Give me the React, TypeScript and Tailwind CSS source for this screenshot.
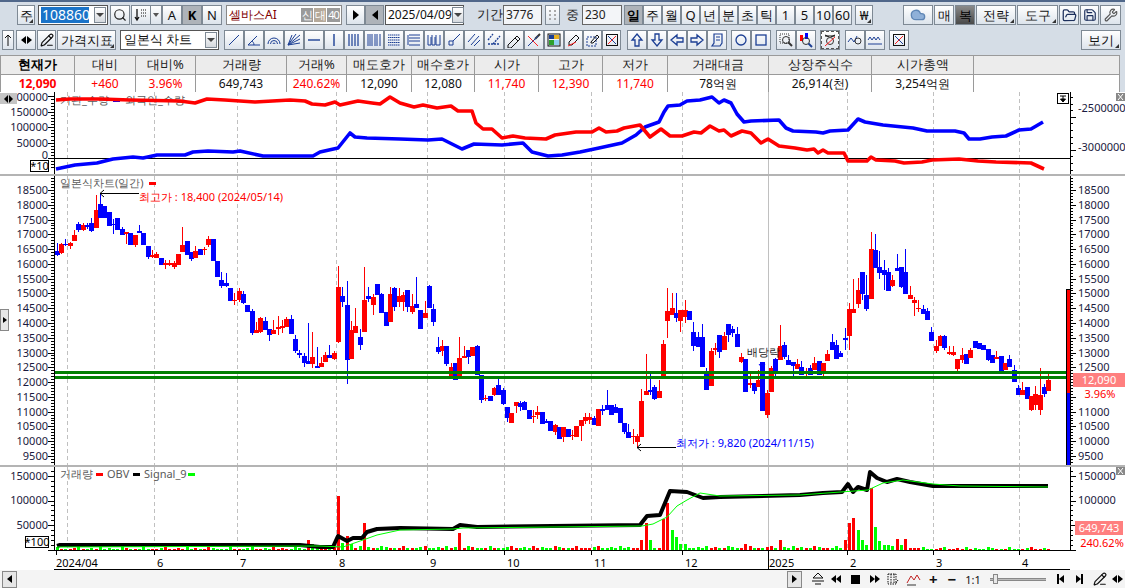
import type { ReactNode } from "react";
import { Search, FolderOpen, Save, Wrench, Cloud, PencilLine } from "lucide-react";

// [up, bodyTop, bodyBottom, wickTop, wickBottom] in page pixels
type Candle = [number, number, number, number?, number?];
const candles: Candle[] = [
  [0,251,255,243,256],[1,244,253,243,254],[0,244,245,239,246],[1,243,246,242,249],[1,235,241,230,241],[0,224,230,222,232],[1,225,230,223,231],[0,225,227,223,229],[0,223,231,218,232],[1,210,228,195,228],
  [0,204,218,193,218],[0,206,218],[0,212,226],[0,224,225,219,234],[0,218,230],[0,229,235,227,235],[1,232,234,232,244],[0,233,245],[1,235,245,235,247],[0,231,233,225,233],
  [0,233,245],[0,246,257,246,259],[1,255,257,250,258],[1,254,258,252,258],[0,258,265],[1,263,265,260,269],[1,263,265,260,266],[1,263,267,261,269],[1,254,265],[1,245,252,227,252],
  [0,241,255],[0,252,259,252,261],[1,251,258,246,258],[0,249,255],[1,249,250,247,255],[1,239,245,236,247],[0,239,261],[0,261,277],[0,280,286,272,288],[0,283,286,273,287],
  [0,288,301],[1,300,301,293,305],[1,291,300,288,302],[0,294,303,291,304],[0,305,312],[0,311,333,309,335],[1,330,333,322,333],[1,318,332,317,333],[0,321,330,317,330],[0,329,335,329,341],
  [1,330,334,320,334],[1,327,329,316,335],[1,326,328,320,333],[1,319,327,317,327],[0,319,334,315,334],[0,339,351,335,353],[0,353,355,350,358],[0,356,363,353,367],[0,361,364,323,364],[1,357,364,332,368],
  [0,366,368,347,368],[1,363,367,357,367],[1,355,362,352,362],[0,355,358,345,358],[1,353,359,351,360],[1,287,342,266,343],[0,296,302,287,307],[0,305,360,281,384],[1,330,359,321,359],[1,326,333,308,333],
  [0,337,345,329,350],[1,300,332,267,332],[0,296,299,287,302],[1,297,305,294,315],[0,284,295],[0,294,313,293,313],[0,312,326],[1,294,322,287,322],[0,288,307,287,311],[1,296,302,288,307],
  [1,295,302,292,311],[0,290,307,290,312],[1,306,312,294,314],[0,304,308,277,308],[0,310,329],[1,313,318,301,318],[0,286,308,285,308],[0,309,322,304,326],[0,347,352,337,354],[1,346,351,340,356],
  [0,346,364,346,366],[1,367,376,363,378],[0,363,380],[1,358,376,337,376],[1,356,358,346,358],[0,350,357,350,364],[1,347,356],[0,346,375,345,375],[0,375,400,375,403],[1,398,399,395,401],
  [0,396,401],[1,388,395,387,396],[0,385,395,379,395],[0,390,404,388,405],[0,407,418,407,422],[1,413,423],[1,402,406,402,413],[0,403,407,401,411],[0,402,410,401,410],[0,410,419],
  [1,416,417,410,423],[1,412,415,406,419],[0,412,424],[0,421,423,419,423],[0,421,431],[1,425,432,424,435],[0,427,439],[1,427,437,427,442],[0,429,437],[1,435,436,430,440],
  [1,426,437],[1,420,426,420,441],[1,417,421,413,424],[1,417,420,413,424],[0,418,425,416,425],[1,409,426],[0,409,411,405,415],[0,405,410,390,410],[0,405,415],[0,407,413,404,413],
  [0,408,423],[0,423,432,423,434],[0,432,438,424,438],[1,436,437,429,444],[1,436,442,434,447],[1,401,437,389,437],[1,391,395,354,395],[0,390,392,373,395],[0,387,399,385,400],[1,391,398,380,398],
  [1,344,376,340,377],[1,311,321,288,338],[1,308,315,293,315],[0,313,318,293,322],[1,310,321,310,332],[1,310,317,300,323],[0,311,320],[0,332,346,322,351],[0,337,347,332,347],[0,337,367,324,367],
  [0,372,390,368,390],[1,351,386,348,386],[1,348,350,343,355],[0,335,352,335,358],[1,336,350,332,350],[0,324,335,324,342],[0,329,333,326,337],[0,334,347,327,347],[1,357,362,353,363],[0,359,392],
  [1,383,385,373,388],[0,383,391,383,394],[1,380,387,370,387],[0,362,411],[1,393,415,390,418],[1,368,392,366,392],[0,359,371,358,376],[1,346,360,325,360],[0,345,357,342,359],[0,360,365,355,365],
  [0,362,366,362,376],[1,364,369,359,369],[0,367,375,361,375],[1,372,373,368,377],[0,368,375,365,375],[1,363,370,357,370],[0,361,375],[1,363,371,363,376],[1,354,361,350,361],[0,342,350,334,350],
  [0,345,359,340,359],[0,353,357,351,357],[0,338,340,328,350],[1,309,336,303,350],[1,309,313,279,313],[1,290,304,278,308],[0,272,294,272,300],[0,295,309,275,311],[1,249,299,232,299],[0,250,268,234,268],
  [0,267,273,251,279],[0,270,275,260,290],[0,272,291,268,291],[1,280,286,275,287],[0,268,271,254,271],[0,267,287,267,288],[0,272,294,249,294],[1,295,299,286,299],[1,300,303,297,316],[1,308,309,300,312],
  [0,309,314,305,314],[0,311,320,308,320],[0,332,341,327,341],[1,346,351,340,353],[1,336,346,335,346],[0,336,348,335,350],[1,352,354,346,355],[1,352,355,346,356],[1,359,369,359,371],[1,355,360,348,363],
  [0,354,364],[1,350,358,348,358],[0,341,348],[0,343,349],[0,345,350],[0,349,360,349,361],[0,355,363],[1,357,359,351,359],[0,356,371],[1,363,370],
  [0,359,367,355,367],[0,370,382,365,382],[0,388,395,385,395],[1,390,395,382,395],[0,387,399],[1,396,410,396,411],[1,394,405,386,410],[1,395,410,368,415],[0,387,394,384,397],[1,380,391,371,391],
];

const candleX = (i: number) => 56.7 + i * 4.33;

// volume spikes: index -> [height, up]
const spikes: Record<number, [number, number]> = {
  58:[10,1],59:[6,0],65:[54,1],66:[7,0],67:[14,1],68:[6,0],71:[27,1],93:[17,1],135:[10,1],136:[27,1],137:[10,0],140:[31,1],141:[47,1],142:[20,0],143:[13,0],144:[6,0],145:[6,0],
  159:[6,1],167:[10,1],182:[10,1],183:[27,1],184:[32,1],185:[20,0],186:[10,0],187:[5,0],188:[62,1],189:[23,0],190:[9,0],191:[5,0],192:[5,0],193:[4,0],194:[11,1],195:[5,0],196:[11,1],
};

const toPts = (p: number[][]) => p.map((a) => a.join(",")).join(" ");

const blueLine = [[56,169],[75,165],[97,163],[113,159],[133,157],[143,158],[157,155],[185,155],[193,152],[208,151],[233,152],[240,151],[263,156],[313,156],[320,152],[338,148],[350,133],[355,137],[367,138],[400,139],[428,140],[442,139],[462,149],[474,144],[502,145],[523,143],[532,152],[548,156],[562,155],[580,152],[599,148],[622,143],[636,135],[645,127],[659,122],[664,112],[668,106],[680,105],[687,101],[700,100],[712,97],[719,103],[724,100],[731,103],[737,114],[744,122],[751,121],[779,120],[786,128],[793,131],[816,132],[823,133],[830,131],[848,130],[858,119],[865,122],[883,125],[913,128],[927,131],[955,131],[964,133],[969,139],[980,139],[992,137],[1006,136],[1019,130],[1031,129],[1043,122]];
const redLine = [[56,100],[70,99],[100,99],[130,100],[180,101],[195,103],[207,99],[225,100],[255,102],[290,100],[305,101],[312,104],[325,105],[335,102],[340,105],[358,101],[372,103],[380,104],[390,97],[400,103],[414,107],[423,105],[437,108],[451,106],[458,111],[472,111],[476,123],[483,129],[492,129],[502,138],[513,136],[525,138],[546,139],[555,135],[576,132],[592,132],[599,128],[606,132],[617,131],[624,128],[640,125],[650,137],[661,129],[670,136],[682,136],[694,132],[701,133],[710,126],[719,131],[724,130],[731,136],[742,131],[751,133],[761,143],[768,139],[779,146],[795,148],[807,150],[814,149],[818,153],[823,150],[828,153],[844,153],[848,161],[867,161],[871,157],[876,160],[895,161],[904,163],[922,162],[932,160],[959,159],[978,161],[996,162],[1031,163],[1044,169]];
const obvLine = [[57,546],[60,545],[300,545],[320,547],[333,547],[338,536],[347,541],[353,538],[362,538],[367,532],[377,529],[400,528],[453,529],[460,525],[477,527],[640,525],[647,516],[660,515],[665,503],[670,491],[687,492],[703,498],[720,497],[800,495],[823,493],[842,492],[848,484],[853,492],[858,487],[867,490],[870,472],[877,478],[887,482],[897,479],[910,482],[933,486],[1008,486],[1048,486]];
const signalLine = [[57,547],[320,546],[343,547],[363,540],[377,535],[400,530],[453,529],[463,528],[642,526],[653,524],[667,517],[677,506],[687,500],[700,493],[720,496],[800,495],[827,493],[868,490],[883,483],[903,480],[933,484],[960,486],[1048,487]];

const gridX = [67, 154, 237, 336, 427, 504, 591, 682, 847, 933, 1019];

const priceY = (p: number) => 190 + (18500 - p) * 0.02955;

function GridLines({ y1, y2 }: { y1: number; y2: number }) {
  return (
    <>
      {gridX.map((x) => (
        <line key={x} x1={x + 0.5} x2={x + 0.5} y1={y1} y2={y2} stroke="#c0c0c0" strokeDasharray="4 3" />
      ))}
      <line x1={768.5} x2={768.5} y1={y1} y2={y2} stroke="#c0c0c0" />
    </>
  );
}

function Axis({ x, y1, y2, ticks, dir }: { x: number; y1: number; y2: number; ticks: { y: number; major: boolean }[]; dir: number }) {
  return (
    <g shapeRendering="crispEdges">
      <line x1={x + 0.5} x2={x + 0.5} y1={y1} y2={y2} stroke="#000" />
      {ticks.map((t, i) => (
        <line key={i} x1={x} x2={x + dir * (t.major ? 6 : 3)} y1={t.y} y2={t.y} stroke="#000" />
      ))}
    </g>
  );
}

function Label({ x, y, end, fill = "#1a1a40", children }: { x: number; y: number; end?: boolean; fill?: string; children: ReactNode }) {
  return (
    <text x={x} y={y + 4} fontSize="11" fill={fill} textAnchor={end ? "end" : "start"}>
      {children}
    </text>
  );
}

function CloseBox({ y }: { y: number }) {
  return (
    <>
      <rect x={1116} y={y} width={9} height={8} fill="#888" />
      <path d={`M1118 ${y + 1}l5 6M1123 ${y + 1}l-5 6`} stroke="#fff" />
    </>
  );
}

function FlowPanel() {
  const ticks: { y: number; major: boolean }[] = [];
  for (let v = -30000; v <= 200000; v += 10000) ticks.push({ y: 158 - v * 0.000308, major: v % 50000 === 0 });
  const right: { y: number; major: boolean }[] = [];
  for (let y = 97; y < 174; y += 6.6) right.push({ y: Math.round(y), major: Math.abs(y - 114) < 3.5 || Math.abs(y - 147) < 3.5 });
  return (
    <svg className="block bg-white" width={1125} height={82} viewBox="0 92 1125 82">
      <GridLines y1={92} y2={174} />
      <line x1={54} x2={1070} y1={158.5} y2={158.5} stroke="#000" shapeRendering="crispEdges" />
      <Axis x={54} y1={92} y2={174} ticks={ticks.filter((t) => t.y > 92).map((t) => ({ y: Math.round(t.y), major: t.major }))} dir={-1} />
      <Axis x={1070} y1={92} y2={174} ticks={right} dir={1} />
      {[["200000", 97], ["150000", 112], ["100000", 127], ["50000", 143], ["0", 155]].map(([t, y]) => (
        <Label key={t} x={48} y={y as number} end>{t}</Label>
      ))}
      <Label x={1078} y={108}>-2500000</Label>
      <Label x={1078} y={147}>-3000000</Label>
      <text x={60} y={104} fontSize="11" fill="#5a5a5a">기관_수량</text>
      <rect x={113} y={99} width={7} height={3} fill="#0000ff" />
      <text x={125} y={104} fontSize="11" fill="#5a5a5a">외국인_수량</text>
      <polyline points={toPts(blueLine)} fill="none" stroke="#0000ff" strokeWidth={3.6} strokeLinejoin="round" />
      <polyline points={toPts(redLine)} fill="none" stroke="#ff0000" strokeWidth={3.6} strokeLinejoin="round" />
      <rect x={30.5} y={160.5} width={18} height={11} fill="#fff" stroke="#000" shapeRendering="crispEdges" />
      <text x={39.5} y={170} fontSize="11" textAnchor="middle" fill="#000">*10</text>
      <rect x={1057.5} y={93.5} width={11} height={10} fill="#fff" stroke="#000" shapeRendering="crispEdges" />
      <path d="M1060 96h6M1063 96v3M1060.5 99l2.5 3l2.5-3z" stroke="#000" fill="#000" />
      <CloseBox y={93} />
    </svg>
  );
}

function PricePanel() {
  const ticks: { y: number; major: boolean }[] = [];
  for (let p = 9200; p <= 19000; p += 100) {
    const y = Math.round(priceY(p));
    if (y > 176 && y < 465) ticks.push({ y, major: p % 500 === 0 });
  }
  const left = [];
  for (let p = 9500; p <= 18500; p += 500) left.push(p);
  const right = left.filter((p) => p !== 12000 && p !== 11500);
  return (
    <svg className="block bg-white" width={1125} height={289} viewBox="0 176 1125 289">
      <GridLines y1={176} y2={465} />
      <Axis x={54} y1={176} y2={465} ticks={ticks} dir={-1} />
      <Axis x={1070} y1={176} y2={465} ticks={ticks} dir={1} />
      {left.map((p) => <Label key={p} x={48} y={priceY(p)} end>{p}</Label>)}
      {right.map((p) => <Label key={p} x={1078} y={priceY(p)}>{p}</Label>)}

      <g shapeRendering="crispEdges">
        {candles.map(([up, t, b, wt, wb], i) => {
          const x = Math.round(candleX(i));
          const col = up ? "#ff0000" : "#0000ff";
          return (
            <g key={i}>
              <rect x={x} y={wt ?? t} width={1} height={(wb ?? b) - (wt ?? t)} fill={col} />
              <rect x={x - 2} y={t} width={4.5} height={Math.max(b - t, 1)} fill={col} />
            </g>
          );
        })}
        <rect x={55} y={371} width={1011} height={3} fill="#008000" />
        <rect x={55} y={376} width={1011} height={3} fill="#008000" />
        <rect x={1066} y={289} width={5} height={176} fill="#000" />
        <rect x={1067} y={290} width={3} height={103} fill="#ff0000" />
        <rect x={1067} y={393} width={3} height={72} fill="#0000ff" />
        <rect x={1073} y={373} width={52} height={14} fill="#ff7f7f" />
      </g>

      <text x={60} y={187} fontSize="11" fill="#5a5a5a">일본식차트(일간)</text>
      <rect x={149} y={182} width={7} height={3} fill="#ff0000" />

      <path d="M139 193.5H100M104 190l-4 3.500l4 3.500" fill="none" stroke="#000" />
      <text x={139} y={201} fontSize="11" fill="#ff0000">최고가 : 18,400 (2024/05/14)</text>

      <path d="M676 447.5H637M641 444l-4 3.500l4 3.500" fill="none" stroke="#000" />
      <text x={676} y={447} fontSize="11" fill="#0000ff">최저가 : 9,820 (2024/11/15)</text>

      <text x={747} y={356} fontSize="11" fill="#222">배당락</text>
      <path d="M759 364l3 4l3-4M762 368v3" fill="none" stroke="#0000ff" />

      <text x={1099} y={384} fontSize="11" textAnchor="middle" fill="#fff">12,090</text>
      <text x={1100} y={398} fontSize="11" textAnchor="middle" fill="#ff0000">3.96%</text>
    </svg>
  );
}

function VolumePanel() {
  const ticks: { y: number; major: boolean }[] = [];
  for (let v = 0; v <= 160000; v += 10000) ticks.push({ y: Math.round(549.5 - v * 0.00049), major: v % 50000 === 0 });
  const months: [string, number][] = [["2024/04", 56], ["6", 154], ["7", 237], ["8", 336], ["9", 427], ["10", 504], ["11", 591], ["12", 682], ["2025", 768], ["2", 847], ["3", 933], ["4", 1019]];
  return (
    <svg className="block bg-white" width={1125} height={103} viewBox="0 467 1125 103">
      <GridLines y1={467} y2={550} />
      <Axis x={54} y1={467} y2={550} ticks={ticks} dir={-1} />
      <Axis x={1070} y1={467} y2={550} ticks={ticks} dir={1} />
      {[[150000, 476], [100000, 500], [50000, 525]].map(([t, y]) => (
        <Label key={t} x={48} y={y} end>{t}</Label>
      ))}
      {[[150000, 476], [100000, 500]].map(([t, y]) => (
        <Label key={t} x={1078} y={y}>{t}</Label>
      ))}
      <text x={60} y={478} fontSize="11" fill="#5a5a5a">거래량</text>
      <rect x={96} y={473} width={7} height={3} fill="#ff0000" />
      <text x={107} y={478} fontSize="11" fill="#5a5a5a">OBV</text>
      <rect x={133} y={473} width={7} height={3} fill="#000" />
      <text x={144} y={478} fontSize="11" fill="#5a5a5a">Signal_9</text>
      <rect x={188} y={473} width={7} height={3} fill="#00ff00" />

      <g shapeRendering="crispEdges">
        {candles.map((c, i) => {
          const s = spikes[i];
          const h = s ? s[0] : 1 + ((i * 7) % 5 === 0 ? 2 : (i * 3) % 4 === 0 ? 1 : 0) + (i > 60 && i < 200 ? 1 : 0);
          const up = s ? s[1] : c[0];
          return <rect key={i} x={Math.round(candleX(i)) - 1} y={550 - h} width={3} height={h} fill={up ? "#ff0000" : "#00ff00"} />;
        })}
      </g>
      <polyline points={toPts(obvLine)} fill="none" stroke="#000" strokeWidth={4} strokeLinejoin="round" />
      <polyline points={toPts(signalLine)} fill="none" stroke="#00ff00" strokeWidth={1} />

      <rect x={25.5} y={536.5} width={23} height={11} fill="#fff" stroke="#000" shapeRendering="crispEdges" />
      <text x={37} y={546} fontSize="11" textAnchor="middle" fill="#000">*100</text>
      <rect x={1075} y={521} width={48} height={14} fill="#ff7f7f" />
      <text x={1099} y={532} fontSize="11" textAnchor="middle" fill="#fff">649,743</text>
      <text x={1102} y={547} fontSize="11" textAnchor="middle" fill="#ff0000">240.62%</text>

      <g shapeRendering="crispEdges">
        <line x1={54} x2={1070} y1={550.5} y2={550.5} stroke="#000" />
        <line x1={54} x2={1070} y1={569.5} y2={569.5} stroke="#000" />
        {months.map(([m, x]) => (
          <line key={m} x1={x + 0.5} x2={x + 0.5} y1={551} y2={m === "2025" ? 569 : 555} stroke="#000" />
        ))}
      </g>
      {months.map(([m, x]) => (
        <text key={m} x={m === "2024/04" ? 56 : m === "2025" ? 769 : x + 3} y={567} fontSize="11" fill="#000">{m}</text>
      ))}
      <CloseBox y={467} />
    </svg>
  );
}

function Corner() {
  return <span className="absolute right-[1px] bottom-[1px] w-0 h-0 border-l-[4px] border-l-transparent border-b-[4px] border-b-[#333]" />;
}

function Btn({ w, ml = 0, pressed, dark, corner, className = "", children }: { w: number; ml?: number; pressed?: boolean; dark?: boolean; corner?: boolean; className?: string; children?: ReactNode }) {
  const tone = dark
    ? "bg-gradient-to-b from-[#8a8a8a] to-[#4a4a4a] text-black"
    : pressed
    ? "bg-[#aeb3b9] text-black"
    : "bg-gradient-to-b from-white to-[#dde4ec] text-[#111]";
  return (
    <div
      style={{ width: w, marginLeft: ml }}
      className={`relative shrink-0 h-[20px] flex items-center justify-center border border-[#7e8994] text-[13px] leading-none ${tone} ${className}`}
    >
      {children}
      {corner && <Corner />}
    </div>
  );
}

function DropArrow() {
  return (
    <div className="shrink-0 w-[12px] h-[16px] border border-[#7e8994] bg-gradient-to-b from-white to-[#d5d9de] flex items-center justify-center">
      <span className="w-0 h-0 border-x-[4px] border-x-transparent border-t-[4px] border-t-[#444]" />
    </div>
  );
}

function Ico({ children, w = 20, ml = 0, box }: { children: ReactNode; w?: number; ml?: number; box?: boolean }) {
  return (
    <Btn w={w} ml={ml} className={box ? "outline-1 outline-dashed outline-[#555] -outline-offset-2" : ""}>
      <svg width={16} height={16} viewBox="0 0 16 16" fill="none" stroke="#1c3f94" strokeWidth={1}>
        {children}
      </svg>
    </Btn>
  );
}

const XBox = (
  <>
    <rect x={2.5} y={2.5} width={11} height={11} stroke="#111" />
    <path d="M4 12L12 4" stroke="#ff2020" />
    <path d="M4 4l8 8" stroke="#1c3f94" />
  </>
);

const drawTools: ReactNode[] = [
  <path d="M3 13L13 3" />,
  <path d="M2 13h12M2 13L11 4M8 13c0-2-1-3-2-4" />,
  <path d="M2 12a6 6 0 0112 0M4.5 12a3.5 3.5 0 017 0M7 12a1 1 0 012 0" />,
  <path d="M2 13L14 3M2 13l12-6M2 13l12-2M2 13L10 2M2 13L6 3" />,
  <path d="M2 8h12" strokeWidth={1.4} />,
  <path d="M8 2v12" strokeWidth={1.4} />,
  <path d="M3 2v12M6 2v12M9 2v12M12 2v12" strokeWidth={1.2} />,
  <path d="M2 2v12M4 2v12M6 2v12M9 2v12M11 2v12M14 2v12" />,
  <path d="M2 3h12M2 5.5h12M2 8h12M2 10.5h12M2 13h12" strokeDasharray="1.5 0.5" />,
  <path d="M2 3v10M3 3h11M3 6h11M3 9h11M3 13h11" />,
  <path d="M2 3v10h3V5M6 3v10h3V5M10 3v10h4V3" />,
  <path d="M3 9h4v4H3zM7 9l7-7" />,
  <path d="M2 10l7-8M5 13l8-9M8 14l6-6" />,
  <path d="M2 8l5-6M7 12l7-8M2 12h12" strokeDasharray="2 1" strokeWidth={1.3} />,
  <path d="M2 13l9-9 3 3-9 9H2zM9 6l3 3" stroke="#111" />,
  <g><path d="M9 7l5-5" stroke="#333" strokeWidth={2} /><path d="M2 4l10 10" stroke="#ff2020" /><path d="M2 14L12 4" stroke="#1c3f94" /></g>,
  <g><rect x={2} y={2} width={12} height={12} stroke="#111" /><rect x={3} y={3} width={5} height={4} fill="#1c3f94" stroke="none" /><rect x={8} y={3} width={5} height={4} fill="#e8b020" stroke="none" /><rect x={3} y={8} width={5} height={5} fill="#2ca02c" stroke="none" /><rect x={8} y={8} width={5} height={5} fill="#8fd0f0" stroke="none" /></g>,
  <g><path d="M3 10l7-7 3 3-7 7H3z" stroke="#111" /><path d="M2 14l8-4" stroke="#ff2020" /></g>,
  <g><rect x={2} y={5} width={9} height={9} strokeDasharray="2 1" /><path d="M6 10l6-7 2 2-6 6H6z" stroke="#111" /></g>,
  XBox,
];

const arrowTools: ReactNode[] = [
  <path d="M8 2l5 6h-3v6H6V8H3z" strokeWidth={1.3} />,
  <path d="M8 14l5-6h-3V2H6v6H3z" strokeWidth={1.3} />,
  <path d="M2 8l6-5v3h6v4H8v3z" strokeWidth={1.3} />,
  <path d="M14 8L8 3v3H2v4h6v3z" strokeWidth={1.3} />,
  <path d="M5 2h8v9l-2 3H3l2-3zM7 5h4M7 8h4" strokeWidth={1.2} />,
];

const zoomTools: ReactNode[] = [
  <g stroke="#333"><rect x={2} y={2} width={9} height={9} strokeDasharray="1 1" /><circle cx={8} cy={8} r={3.5} /><path d="M10.5 10.5L14 14" strokeWidth={2} /></g>,
  <g><rect x={2} y={3} width={3} height={6} fill="#ff0000" stroke="none" /><rect x={7} y={1} width={3} height={6} fill="#0000ff" stroke="none" /><circle cx={8} cy={9} r={3.5} stroke="#333" /><path d="M10.5 11.5L14 15" stroke="#1c3f94" strokeWidth={2} /></g>,
];

function Toolbars() {
  const times = ["주", "월", "Q", "년", "분", "초", "틱", "1", "5", "10", "60"];
  return (
    <div className="h-[55px] border-t-2 border-[#50678a] flex flex-col">
      <div className="flex items-center h-[20px] mt-[3px] pl-[17px]">
        <Btn w={18} corner>주</Btn>
        <div className="ml-[3px] w-[70px] h-[20px] shrink-0 border border-[#555] bg-white flex items-center pl-[2px] pr-[1px]">
          <span className="bg-[#1a73c8] text-white text-[14px] leading-[16px] px-[1px] w-[48px]">108860</span>
          <span className="ml-auto"><DropArrow /></span>
        </div>
        <Btn w={20} ml={2}><Search size={14} color="#222" strokeWidth={2} /></Btn>
        <Btn w={20} ml={1}>
          <svg width={14} height={14} viewBox="0 0 14 14" fill="none" stroke="#111"><path d="M3 1v11M1 9l2 3 2-3" strokeWidth={1.3} /><path d="M7 2h6M7 5h6M7 8h6" strokeDasharray="1 1" /></svg>
        </Btn>
        <Btn w={11} className="border-l-0"><span className="w-0 h-0 border-x-[3px] border-x-transparent border-t-[4px] border-t-[#555]" /></Btn>
        <Btn w={20} className="text-[12px]">A</Btn>
        <Btn w={20} pressed className="font-bold text-[12px]">K</Btn>
        <Btn w={20} className="text-[12px]">N</Btn>
        <div className="ml-[4px] w-[116px] h-[20px] shrink-0 border border-[#888] bg-white flex items-center pl-[2px] pr-[1px] text-[12px] text-[#800000]">
          <span>셀바스AI</span>
          <span className="ml-auto flex gap-[1px] text-[11px] leading-[14px] text-white">
            <span className="bg-[#9a9a9a] w-[12px] text-center">신</span>
            <span className="bg-[#b5a99a] w-[12px] text-center">대</span>
            <span className="bg-[#9a9a9a] w-[13px] text-center tracking-[-1px]">40</span>
          </span>
        </div>
        <Btn w={19} ml={4}><span className="w-0 h-0 border-y-[5px] border-y-transparent border-l-[6px] border-l-black" /></Btn>
        <Btn w={19} pressed><span className="w-0 h-0 border-y-[5px] border-y-transparent border-r-[6px] border-r-black" /></Btn>
        <div className="ml-[1px] w-[79px] h-[20px] shrink-0 border border-[#555] bg-white flex items-center pl-[2px] pr-[1px] text-[12px] text-[#111]">
          <span>2025/04/09</span>
          <span className="ml-auto"><DropArrow /></span>
        </div>
        <span className="ml-[13px] w-[26px] shrink-0 text-[13px] text-[#222]">기간</span>
        <div className="w-[39px] h-[20px] shrink-0 border border-[#666] bg-[#f3f5f8] text-[12px] pl-[2px] leading-[18px] text-[#222]">3776</div>
        <Btn w={15} ml={3}>
          <svg width={10} height={12} viewBox="0 0 10 12" fill="#aaa"><path d="M1 1h2v2H1zM6 1h2v2H6zM1 5h2v2H1zM6 5h2v2H6zM1 9h2v2H1zM6 9h2v2H6z" /></svg>
        </Btn>
        <span className="ml-[2px] w-[20px] shrink-0 text-center text-[13px] text-[#222]">중</span>
        <div className="w-[40px] h-[20px] shrink-0 border border-[#666] bg-[#f3f5f8] text-[12px] pl-[2px] leading-[18px] text-[#222]">230</div>
        <Btn w={19} ml={2} pressed className="font-bold">일</Btn>
        {times.map((t) => <Btn key={t} w={19} className="text-[12px]">{t}</Btn>)}
        <Btn w={18} ml={3} corner className="text-[12px]">₩</Btn>
        <Btn w={30} ml={30}><Cloud size={16} fill="#8fb0d8" color="#5f86b5" /></Btn>
        <Btn w={20} ml={1}>매</Btn>
        <Btn w={20} ml={1} dark>복</Btn>
        <Btn w={40} ml={1} corner>전략</Btn>
        <Btn w={41} ml={1} corner>도구</Btn>
        <Btn w={20} ml={1}><FolderOpen size={15} color="#1c2f5c" strokeWidth={2} /></Btn>
        <Btn w={19} ml={1}><Save size={14} color="#1c2f5c" strokeWidth={2} /></Btn>
        <Btn w={21} ml={1}><Wrench size={14} color="#555" strokeWidth={2} /></Btn>
      </div>

      <div className="flex items-center h-[20px] mt-[5px] pl-[2px]">
        <Btn w={12}>
          <svg width={8} height={14} viewBox="0 0 8 14" fill="none" stroke="#111"><path d="M4 13V2M1 5l3-3 3 3" /></svg>
        </Btn>
        <Btn w={20} ml={2}>
          <span className="flex gap-[1px]">
            <span className="w-0 h-0 border-y-[4px] border-y-transparent border-r-[5px] border-r-black" />
            <span className="w-0 h-0 border-y-[4px] border-y-transparent border-l-[5px] border-l-black" />
          </span>
        </Btn>
        <Btn w={19} ml={1}><PencilLine size={14} color="#111" strokeWidth={2} /></Btn>
        <Btn w={59} ml={1} corner>가격지표</Btn>
        <div className="ml-[4px] w-[99px] h-[20px] shrink-0 border border-[#555] bg-white flex items-center pl-[3px] pr-[1px] text-[13px] text-[#111]">
          <span>일본식 차트</span>
          <span className="ml-auto"><DropArrow /></span>
        </div>
        <div className="w-[5px] shrink-0" />
        {drawTools.map((d, i) => <Ico key={i} w={i >= 17 ? 19 : 20}>{d}</Ico>)}
        <div className="w-[6px] shrink-0" />
        {arrowTools.map((d, i) => <Ico key={i}>{d}</Ico>)}
        <div className="w-[4px] shrink-0" />
        <Ico><circle cx={8} cy={8} r={5} strokeWidth={1.3} /></Ico>
        <Ico><rect x={3} y={3} width={10} height={10} strokeWidth={1.3} /></Ico>
        <div className="w-[5px] shrink-0" />
        {zoomTools.map((d, i) => <Ico key={i}>{d}</Ico>)}
        <Ico ml={4} box>
          <path d="M3 3l4 2M13 3l-4 2M3 4h10" stroke="#111" />
          <circle cx={8} cy={9} r={3.5} stroke="#333" />
          <path d="M3 14L13 5" stroke="#ff2020" />
        </Ico>
        <Ico ml={5}><path d="M1 10l3-4 3 4 3-6" /><circle cx={11} cy={9} r={3} stroke="#333" /></Ico>
        <Ico><path d="M1 8l2-3 2 3 2-3 2 3 2-3 2 3M1 12h14" /></Ico>
        <Ico ml={4}>{XBox}</Ico>
        <Btn w={40} ml={172} corner>보기</Btn>
      </div>
    </div>
  );
}

function QuoteTable() {
  const cols: [string, string, string?][] = [
    ["현재가", "12,090", "red"], ["대비", "+460", "red"], ["대비%", "3.96%", "red"], ["거래량", "649,743"], ["거래%", "240.62%", "red"], ["매도호가", "12,090"], ["매수호가", "12,080"],
    ["시가", "11,740", "red"], ["고가", "12,390", "red"], ["저가", "11,740", "red"], ["거래대금", "78억원"], ["상장주식수", "26,914(천)"], ["시가총액", "3,254억원"], ["", ""],
  ];
  return (
    <div className="w-[1120px] h-[37px] shrink-0 grid grid-cols-[74px_61px_60px_91px_60px_65px_63px_64px_64px_65px_101px_103px_102px_1fr] grid-rows-[19px_18px] border-t border-l border-[#9a9a9a]">
      {cols.map(([h], i) => (
        <div key={i} className={`bg-[#ececec] border-r border-b border-[#9a9a9a] flex items-center justify-center text-[13px] text-[#222] ${i === 0 ? "font-bold text-black" : ""}`}>{h}</div>
      ))}
      {cols.map(([, v, c], i) => (
        <div key={i} className={`bg-white border-r border-b border-[#9a9a9a] flex items-center justify-center text-[12px] ${c ? "text-[#ff0000]" : "text-[#111]"} ${i === 0 ? "font-bold" : ""}`}>{v}</div>
      ))}
    </div>
  );
}

function BottomBar() {
  const Tri = ({ r }: { r?: boolean }) => (
    <span className={r ? "w-0 h-0 border-y-[4px] border-y-transparent border-l-[5px] border-l-black" : "w-0 h-0 border-y-[4px] border-y-transparent border-r-[5px] border-r-black"} />
  );
  return (
    <div className="h-[18px] shrink-0 bg-[#f4f4f4] flex items-center relative">
      <div className="ml-[2px] w-[15px] h-[17px] border border-[#888] bg-[#e6e6e6] flex items-center justify-center"><Tri /></div>
      <div className="ml-[770px] w-[15px] h-[17px] border border-[#888] bg-[#e6e6e6] flex items-center justify-center"><Tri r /></div>
      <div className="ml-[9px] flex items-center h-full gap-0 text-[#111]">
        <svg width={14} height={14} viewBox="0 0 14 14" fill="none" stroke="#111"><path d="M7 1L2 6h10zM1 9h12M4 12h6" /></svg>
        <span className="ml-[6px] flex"><Tri /><Tri /></span>
        <span className="ml-[10px] w-[9px] h-[9px] bg-black" />
        <span className="ml-[10px] flex"><Tri r /><Tri r /></span>
        <svg className="ml-[6px]" width={14} height={14} viewBox="0 0 14 14" fill="none" stroke="#111"><path d="M2 2h8v10H2zM5 2v10M8 2v10M12 8l-2 3" strokeDasharray="1.5 1" /></svg>
        <svg className="ml-[6px]" width={15} height={14} viewBox="0 0 15 14" fill="none" stroke="#c02020"><path d="M1 11l4-7 3 4 3-5 3 5" /><path d="M1 13h9" stroke="#333" /></svg>
        <span className="ml-[8px] font-bold text-[15px] leading-none">+</span>
        <span className="ml-[10px] font-bold text-[15px] leading-none">−</span>
        <span className="ml-[9px] text-[11px] leading-none">1:1</span>
        <div className="ml-[9px] relative w-[56px] h-[3px] bg-[#bbb] border-y border-[#888]">
          <span className="absolute left-[3px] -top-[5px] w-[5px] h-[10px] bg-[#e8e8e8] border border-[#888]" />
        </div>
        <span className="ml-[11px] flex items-center"><span className="w-[2px] h-[10px] bg-black" /><Tri /></span>
        <span className="ml-[12px] flex items-center"><Tri r /><span className="w-[2px] h-[10px] bg-black" /></span>
        <PencilLine className="ml-[10px]" size={14} color="#111" strokeWidth={2} />
        <span className="ml-[5px] flex gap-[1px]"><Tri /><Tri r /></span>
      </div>
    </div>
  );
}

export default function App() {
  return (
    <div className="relative w-[1125px] h-[588px] overflow-hidden bg-[#d5dde6] font-['Liberation_Sans','Noto_Sans_CJK_KR',sans-serif] flex flex-col">
      <Toolbars />
      <QuoteTable />
      <FlowPanel />
      <div className="h-[2px] shrink-0 bg-[#b4b4b4]" />
      <PricePanel />
      <div className="h-[2px] shrink-0 bg-[#b4b4b4]" />
      <VolumePanel />
      <BottomBar />
      {/* overlays */}
      <div className="absolute left-0 top-[93px] w-[17px] h-[11px] bg-[#c4c4c4] flex items-center justify-center gap-[1px]">
        <span className="w-0 h-0 border-y-[4px] border-y-transparent border-r-[4px] border-r-black" />
        <span className="w-0 h-0 border-y-[4px] border-y-transparent border-l-[4px] border-l-black" />
      </div>
      <div className="absolute left-0 top-[309px] w-[9px] h-[22px] border border-[#888] bg-[#e6e6e6] flex items-center justify-center">
        <span className="w-0 h-0 border-y-[3px] border-y-transparent border-l-[4px] border-l-black" />
      </div>
    </div>
  );
}
